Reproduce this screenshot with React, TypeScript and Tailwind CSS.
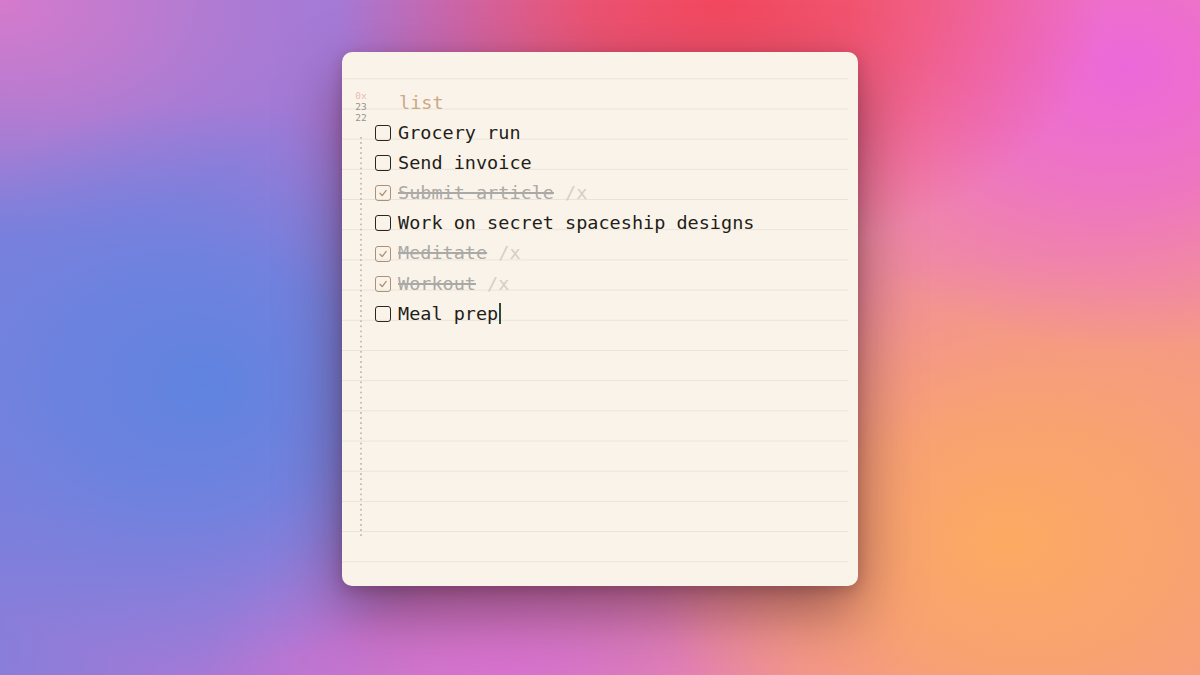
import React from "react";

type Item = { text: string; done: boolean; cursor?: boolean };

const items: Item[] = [
  { text: "Grocery run", done: false },
  { text: "Send invoice", done: false },
  { text: "Submit article", done: true },
  { text: "Work on secret spaceship designs", done: false },
  { text: "Meditate", done: true },
  { text: "Workout", done: true },
  { text: "Meal prep", done: false, cursor: true },
];

const mono = "font-['DejaVu_Sans_Mono','Liberation_Mono',monospace]";

function Box({ done }: { done: boolean }) {
  if (!done) {
    return (
      <span className="w-[16px] h-[16px] rounded-[3px] border-[1.6px] border-[#2b241f] shrink-0" />
    );
  }
  return (
    <span className="w-[16px] h-[16px] rounded-[3px] border-[1.6px] border-[#ad9172] shrink-0 flex items-center justify-center">
      <svg width="10" height="10" viewBox="0 0 10 10" fill="none">
        <path d="M2 5.2 L4.2 7.6 L8.2 2.4" stroke="#ad9172" strokeWidth="1.3" strokeLinecap="round" strokeLinejoin="round" />
      </svg>
    </span>
  );
}

function Row({ item }: { item: Item }) {
  return (
    <div className="h-[30.2px] flex items-center">
      <Box done={item.done} />
      <div className={`ml-[7px] leading-[30.2px] text-[18.5px] whitespace-pre flex items-center ${mono}`}>
        {item.done ? (
          <>
            <span className="text-[#aba9a5] line-through decoration-[#aba9a5] decoration-[1.5px]">{item.text}</span>
            <span className="text-[#d3cfc9]"> /x</span>
          </>
        ) : (
          <span className="text-[#231d18]">{item.text}</span>
        )}
        {item.cursor && <span className="ml-[1px] w-[2px] h-[21px] bg-[#2c4a38]" />}
      </div>
    </div>
  );
}

export default function App() {
  return (
    <div className="w-[1200px] h-[675px] overflow-hidden bg-[radial-gradient(ellipse_28%_42%_at_17%_57%,#5f84e0_0%,rgba(98,132,224,0.75)_45%,transparent_100%),radial-gradient(ellipse_32%_38%_at_60%_0%,#f2475e_0%,rgba(242,72,96,0.8)_35%,transparent_100%),radial-gradient(ellipse_30%_42%_at_94%_10%,#ec68da_0%,rgba(236,104,214,0.7)_45%,transparent_100%),radial-gradient(ellipse_30%_42%_at_84%_80%,#fcaa62_0%,rgba(251,168,100,0.7)_45%,transparent_100%),radial-gradient(ellipse_28%_35%_at_0%_0%,#d67acc_0%,rgba(212,122,203,0.7)_40%,transparent_100%),radial-gradient(ellipse_25%_28%_at_42%_100%,#d872cf_0%,rgba(214,114,204,0.6)_40%,transparent_100%),linear-gradient(100deg,#7a80dc_0%,#b477d4_35%,#ee8aa4_62%,#f59a86_100%)] pt-[52px] flex justify-center">
      <div className="w-[516px] h-[534px] rounded-[10px] bg-[#faf3ea] shadow-[0_24px_60px_rgba(70,25,40,0.55),0_4px_14px_rgba(70,25,40,0.25)] overflow-hidden flex">
        <div className="flex-1 mr-[10px] flex bg-[linear-gradient(to_bottom,transparent_26px,#ebe3d8_26px,#ebe3d8_27px,transparent_27px)] bg-[length:100%_30.2px] bg-repeat-y">
          {/* gutter with counters and the dotted guide */}
          <div className="w-[33px] shrink-0 flex flex-col items-center pt-[38px]">
            <div className={`ml-[5px] text-[9.5px] leading-[11px] text-center ${mono}`}>
              <div className="text-[#ebbcb4]">0x</div>
              <div className="text-[#98938c]">23</div>
              <div className="text-[#98938c]">22</div>
            </div>
            <div className="mt-[14px] ml-[4px] w-[2px] h-[401px] bg-[linear-gradient(to_bottom,#cdbfae_2px,transparent_2px)] bg-[length:2px_5.1px]" />
          </div>
          <div className="flex-1 pt-[35.5px]">
            <div className={`h-[30.2px] pl-[24px] leading-[30.2px] text-[18.5px] text-[#caa985] ${mono}`}>list</div>
            {items.map((it) => (
              <Row key={it.text} item={it} />
            ))}
          </div>
        </div>
      </div>
    </div>
  );
}
